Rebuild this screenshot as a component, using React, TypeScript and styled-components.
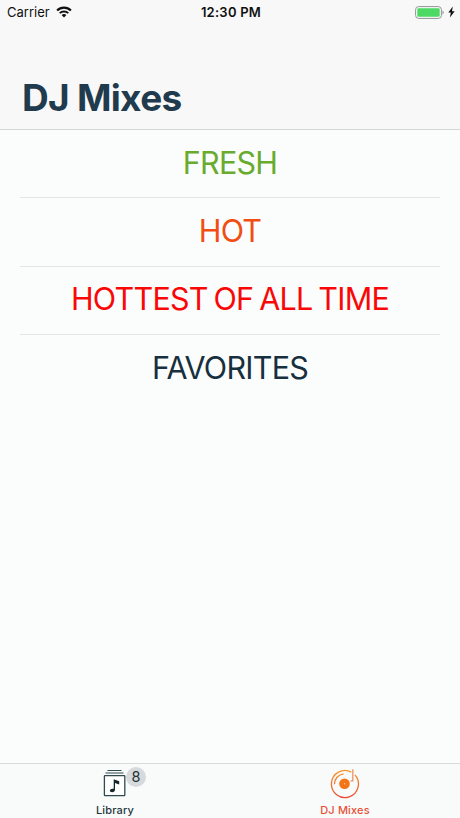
import React from "react";
import styled, { createGlobalStyle } from "styled-components";

const GlobalStyle = createGlobalStyle`
  * { box-sizing: border-box; }
  body { margin: 0; background: #fbfdfc; font-family: Inter, "Liberation Sans", sans-serif; }
`;

const Screen = styled.div`
  display: flex;
  flex-direction: column;
  width: 460px;
  height: 818px;
  background: #fbfdfc;
  overflow: hidden;
`;

const Header = styled.header`
  display: flex;
  flex-direction: column;
  justify-content: space-between;
  height: 130px;
  background: #f8f8f8;
  border-bottom: 1px solid #d5d7d7;
`;

const StatusBar = styled.div`
  display: grid;
  grid-template-columns: 1fr auto 1fr;
  align-items: center;
  height: 24px;
  padding: 0 5px 0 7px;
  color: #101010;
  font-size: 12.6px;
  line-height: 24px;
`;

const StatusGroup = styled.div<{ $end?: boolean }>`
  display: flex;
  align-items: center;
  justify-content: ${(p) => (p.$end ? "flex-end" : "flex-start")};
  gap: ${(p) => (p.$end ? "4px" : "6px")};
  height: 24px;
`;

const Carrier = styled.span`
  font-size: 13px;
  letter-spacing: 0;
`;

const Clock = styled.span`
  font-weight: 600;
  font-size: 13px;
  letter-spacing: 0.25px;
`;

const Title = styled.h1`
  margin: 0 0 8px 22px;
  color: #1f3b4d;
  font-size: 37px;
  line-height: 46px;
  font-weight: 700;
  letter-spacing: -0.7px;
`;

const MixList = styled.ul`
  flex: 1;
  margin: 0;
  padding: 0 20px;
  list-style: none;
`;

const MixRow = styled.li<{ $color: string }>`
  display: flex;
  align-items: center;
  justify-content: center;
  height: 68.5px;
  border-bottom: 1px solid #e3e6e6;
  color: ${(p) => p.$color};
  font-size: 30.5px;
  line-height: 36px;
  letter-spacing: -0.75px;
  word-spacing: -2px;
  &:first-child { height: 68px; }
  padding-bottom: 2px;
  &:last-child { border-bottom-color: transparent; }
`;

const TabBar = styled.nav`
  display: grid;
  grid-template-columns: 1fr 1fr;
  height: 55px;
  background: #f9fafa;
  border-top: 1px solid #d9dbdb;
`;

const Tab = styled.div<{ $color: string }>`
  display: flex;
  flex-direction: column;
  align-items: center;
  color: ${(p) => p.$color};
`;

const TabIcon = styled.div`
  position: relative;
  width: 32px;
  height: 39px;
  padding-top: 4px;
  svg { display: block; }
`;

const TabLabel = styled.span`
  font-size: 11px;
  line-height: 14px;
  font-weight: 500;
  letter-spacing: 0.15px;
`;

const Badge = styled.span`
  position: absolute;
  left: 27px;
  top: 3px;
  width: 20px;
  height: 20px;
  border-radius: 50%;
  background: #d7dadc;
  color: #253238;
  font-size: 14.5px;
  line-height: 20px;
  text-align: center;
`;

const WifiIcon = () => (
  <svg width="16" height="12" viewBox="0 0 16 12" fill="none" stroke="#101010">
    <path d="M1.1 4.5a9.8 9.8 0 0 1 13.8 0" strokeWidth="2.2" />
    <path d="M3.7 7.2a6.1 6.1 0 0 1 8.6 0" strokeWidth="1.9" />
    <path d="M5.6 9.1a3.4 3.4 0 0 1 4.8 0L8 11.5z" fill="#101010" stroke="none" />
  </svg>
);

const BatteryIcon = () => (
  <svg width="29" height="13" viewBox="0 0 29 13">
    <rect x="0.6" y="0.6" width="25.8" height="11.8" rx="3" fill="#fafafa" stroke="#8f9492" strokeWidth="1" />
    <rect x="2.3" y="2.3" width="22.4" height="8.4" rx="1.2" fill="#4cd964" />
    <path d="M27.5 4.5c1.6.7 1.6 3.3 0 4z" fill="#8f9492" />
  </svg>
);

const BoltIcon = () => (
  <svg width="7" height="12" viewBox="0 0 7 12">
    <path d="M4.8.4.3 6.6h2.5L1.9 11.6 6.7 5.2H4z" fill="#101010" />
  </svg>
);

const LibraryIcon = () => (
  <svg width="32" height="30" viewBox="0 0 32 30" fill="none" stroke="#304b50">
    <path d="M8.5 2.5h14M6.5 5h18" strokeWidth="1.2" />
    <rect x="5.4" y="7.6" width="20.4" height="20" rx="0.6" fill="#fff" strokeWidth="1.3" />
    <path d="M14.7 11.2 20.2 13.2v3.4l-4.2-1.6v6.6c0 1.8-1.2 2.7-2.8 2.7-1.6 0-2.3-.7-2.3-1.7 0-1.4 1.7-2.3 3.8-1.8z" fill="#17262d" stroke="none" />
  </svg>
);

const DiscIcon = () => (
  <svg width="32" height="32" viewBox="0 0 32 32" fill="none">
    <defs>
      <linearGradient id="disc" x1="0" y1="2" x2="0" y2="30" gradientUnits="userSpaceOnUse">
        <stop stopColor="#f59a2c" />
        <stop offset="1" stopColor="#e84e38" />
      </linearGradient>
    </defs>
    <path d="M22.3 4.1A13.5 13.5 0 1 0 25.9 6.9" stroke="url(#disc)" strokeWidth="1.3" />
    <path d="M5.4 16.2A10.4 10.4 0 0 1 14.6 5.9" stroke="url(#disc)" strokeWidth="1.3" />
    <circle cx="15.5" cy="15.8" r="5.3" fill="#f47418" />
    <circle cx="15.5" cy="15.8" r="0.7" fill="#fbc496" />
    <path d="M23.8 1.2v11.6h-2.3" stroke="#ed9165" strokeWidth="1.3" />
  </svg>
);

const MIXES = [
  { name: "FRESH", color: "#68ab2e" },
  { name: "HOT", color: "#f04e12" },
  { name: "HOTTEST OF ALL TIME", color: "#fa0808" },
  { name: "FAVORITES", color: "#172f3e" },
];

export default function App() {
  return (
    <Screen>
      <GlobalStyle />
      <Header>
        <StatusBar>
          <StatusGroup>
            <Carrier>Carrier</Carrier>
            <WifiIcon />
          </StatusGroup>
          <Clock>12:30 PM</Clock>
          <StatusGroup $end>
            <BatteryIcon />
            <BoltIcon />
          </StatusGroup>
        </StatusBar>
        <Title>DJ Mixes</Title>
      </Header>
      <MixList>
        {MIXES.map((mix) => (
          <MixRow key={mix.name} $color={mix.color}>{mix.name}</MixRow>
        ))}
      </MixList>
      <TabBar>
        <Tab $color="#24363d">
          <TabIcon>
            <LibraryIcon />
            <Badge>8</Badge>
          </TabIcon>
          <TabLabel>Library</TabLabel>
        </Tab>
        <Tab $color="#e85138">
          <TabIcon>
            <DiscIcon />
          </TabIcon>
          <TabLabel>DJ Mixes</TabLabel>
        </Tab>
      </TabBar>
    </Screen>
  );
}
